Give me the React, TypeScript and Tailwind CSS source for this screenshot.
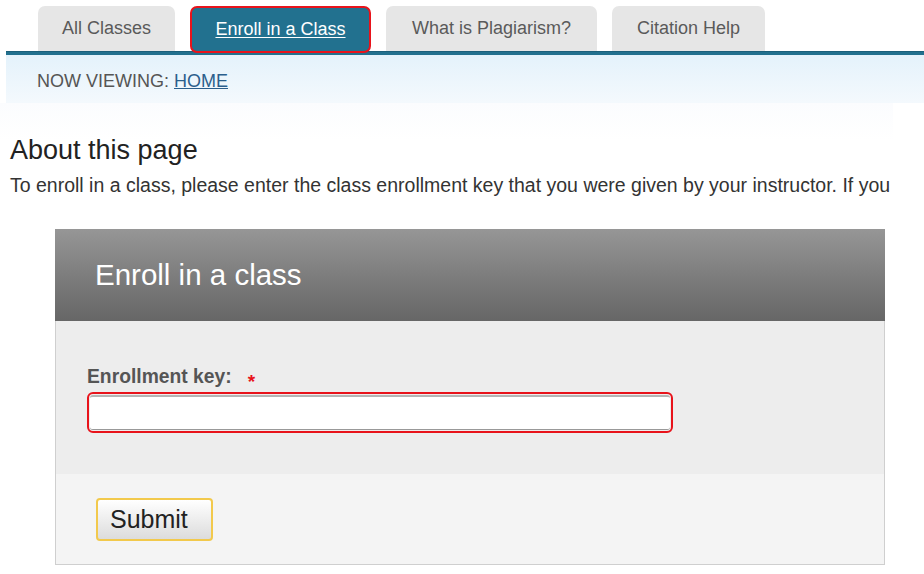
const tabs = [
  { label: 'All Classes', width: 'w-[137px]', active: false },
  { label: 'Enroll in a Class', width: 'w-[181px]', active: true },
  { label: 'What is Plagiarism?', width: 'w-[211px]', active: false },
  { label: 'Citation Help', width: 'w-[153px]', active: false },
]

export default function App() {
  return (
    <div className="w-[924px] h-[574px] overflow-hidden bg-white font-['Liberation_Sans',Arial,sans-serif]">
      <div className="pl-[6px]">
        {/* Tabs */}
        <div className="flex items-end gap-[15px] pl-[32px] pt-[6px] h-[51px]">
          {tabs.map((tab) =>
            tab.active ? (
              <div
                key={tab.label}
                className={`${tab.width} h-[47px] -mb-[2px] relative z-10 flex items-center justify-center rounded-[7px] border-2 border-[#e8131b] bg-[#22718f] text-[18px] text-white underline underline-offset-2`}
              >
                {tab.label}
              </div>
            ) : (
              <div
                key={tab.label}
                className={`${tab.width} h-[45px] flex items-center justify-center rounded-t-[7px] bg-[#e6e6e6] text-[18px] text-[#5a5a5a]`}
              >
                {tab.label}
              </div>
            )
          )}
        </div>
        <div className="h-[4px] bg-[#22708e] border-t border-[#1b5f7a]" />

        {/* Breadcrumb */}
        <div className="h-[48px] flex items-center pl-[31px] pt-[4px] bg-gradient-to-b from-[#e4f2fb] to-[#f4f9fd] text-[18px] text-[#555]">
          NOW VIEWING:&nbsp;
          <span className="text-[#2b5f8c] underline">HOME</span>
        </div>
      </div>

      {/* About */}
      <div className="w-[893px] pl-[10px] pt-[31px] bg-gradient-to-b from-[#fbfcfe] from-0% to-white to-40% overflow-hidden">
        <h1 className="text-[27px] leading-[32px] text-[#222]">About this page</h1>
        <p className="mt-[8px] text-[19.5px] leading-[22px] text-[#333] whitespace-nowrap">
          To enroll in a class, please enter the class enrollment key that you were given by your instructor. If you
        </p>
      </div>

      {/* Enroll card */}
      <div className="ml-[55px] mt-[33px] w-[830px] border border-[#cfcfcf]">
        <div className="h-[92px] -mt-px -mx-px flex items-center pl-[40px] bg-gradient-to-b from-[#969696] to-[#666666] text-[29.5px] text-white">
          Enroll in a class
        </div>
        <div className="h-[153px] bg-[#ededed] pl-[31px] pt-[45px]">
          <div className="flex items-center h-[22px] text-[19.3px] font-bold text-[#555]">
            Enrollment key:
            <span className="ml-[16px] mt-[9px] text-[19px] font-bold text-[#e8131b] leading-none">*</span>
          </div>
          <div className="mt-[4px] w-[586px] h-[41px] rounded-[6px] border-2 border-[#e8131b] p-px">
            <div className="h-full bg-white border-t-2 border-[#b5b5b5] border-b border-b-[#999] rounded-[3px]" />
          </div>
        </div>
        <div className="h-[90px] bg-[#f4f4f4] pl-[40px] pt-[24px]">
          <button className="w-[117px] h-[43px] pl-[12px] text-left rounded-[4px] border-2 border-[#f2c94c] bg-gradient-to-b from-white to-[#dcdcdc] text-[25px] text-[#222] leading-none">
            Submit
          </button>
        </div>
      </div>
    </div>
  )
}
